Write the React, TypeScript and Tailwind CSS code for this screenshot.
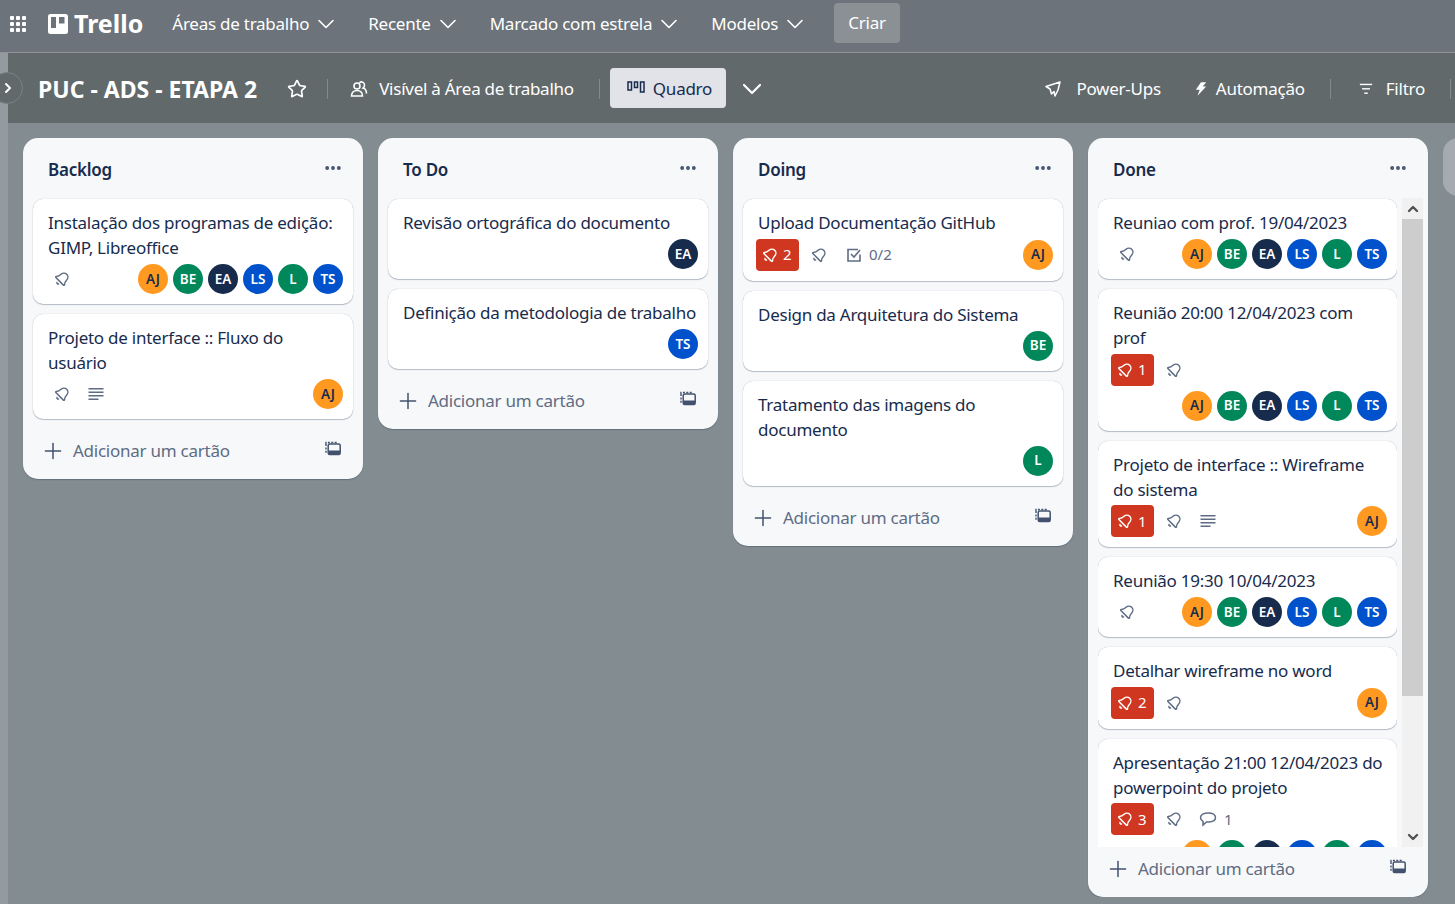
import { Bell as BellIcon, ChevronDown, ChevronRight, ChevronUp, Ellipsis, Plus, Star } from "lucide-react";

const font = "font-['Noto_Sans','Open_Sans',sans-serif]";
const bodyText = "text-[17px] tracking-[-0.25px]";

type Member = "AJ" | "BE" | "EA" | "LS" | "L" | "TS";

const memberColors: Record<Member, string> = {
  AJ: "bg-[#ff991f] text-[#172b4d]",
  BE: "bg-[#00875a] text-white",
  EA: "bg-[#172b4d] text-white",
  LS: "bg-[#0052cc] text-white",
  L: "bg-[#00875a] text-white",
  TS: "bg-[#0052cc] text-white",
};

const everyone: Member[] = ["AJ", "BE", "EA", "LS", "L", "TS"];

function Bell({ className = "" }: { className?: string }) {
  return <BellIcon className={`w-4 h-4 rotate-45 ${className}`} strokeWidth={2.2} />;
}

function Lines() {
  return (
    <svg viewBox="0 0 16 16" className="w-4 h-4 text-[#5e6c84]" fill="currentColor">
      <rect x="0.5" y="2" width="15" height="1.5" />
      <rect x="0.5" y="5.5" width="15" height="1.5" />
      <rect x="0.5" y="9" width="15" height="1.5" />
      <rect x="0.5" y="12.5" width="10" height="1.5" />
    </svg>
  );
}

function Check() {
  return (
    <svg viewBox="0 0 16 16" fill="none" stroke="currentColor" strokeWidth="1.6" className="w-4 h-4 text-[#5e6c84]">
      <path d="M14 7.5V14H2V2.5H12" />
      <path d="M5 7l3 3 6-7" />
    </svg>
  );
}

function Comment() {
  return (
    <svg viewBox="0 0 18 16" fill="none" stroke="currentColor" strokeWidth="1.5" className="w-[18px] h-4 text-[#5e6c84]">
      <path d="M9.5 2C13.5 2 16.5 3.8 16.5 6.6S13.5 11 9.5 11H7.5L4 14V10.4C2.4 9.6 1.5 8.2 1.5 6.6 1.5 3.8 5 2 9.5 2Z" />
    </svg>
  );
}

function Template() {
  return (
    <svg viewBox="0 0 16 16" className="w-4 h-4 text-[#42526e]" fill="none" stroke="currentColor">
      <path d="M1 3V1.5H13" strokeWidth="1.4" strokeDasharray="2 1.4" />
      <path d="M1 3V12.5" strokeWidth="1.4" strokeDasharray="2 1.4" />
      <rect x="3.2" y="3" width="12" height="10.5" rx="1.5" strokeWidth="1.5" />
      <rect x="3.5" y="9.5" width="11.5" height="4" fill="currentColor" stroke="none" />
    </svg>
  );
}

function Avatar({ who }: { who: Member }) {
  return (
    <span className={`w-[30px] h-[30px] shrink-0 rounded-full flex items-center justify-center text-[13.5px] font-semibold ${memberColors[who]}`}>
      {who}
    </span>
  );
}

function Badge({ count }: { count: number }) {
  return (
    <span className="h-8 w-[43px] rounded-[4px] bg-[#cf3721] text-white flex items-center pl-[6px] gap-[5px] text-[15px] -ml-[2px]">
      <Bell />
      {count}
    </span>
  );
}

type CardData = {
  title: string[];
  badge?: number;
  bell?: boolean;
  lines?: boolean;
  checks?: string;
  comments?: number;
  members?: Member[];
  // members go on a row of their own under the badges
  stack?: boolean;
};

function Card({ card }: { card: CardData }) {
  const avatars = (
    <div className="ml-auto flex gap-[5px]">
      {card.members?.map((m) => (
        <Avatar key={m} who={m} />
      ))}
    </div>
  );
  return (
    <div className="bg-white rounded-[10px] shadow-[0_1px_1px_#091e4240,0_0_1px_#091e424f] pl-[15px] pr-[10px] pt-[11px] pb-[10px] shrink-0">
      <div className={`${bodyText} leading-[25px] text-[#172b4d] whitespace-nowrap`}>
        {card.title.map((t) => (
          <div key={t}>{t}</div>
        ))}
      </div>
      <div className={`flex items-center min-h-[30px] text-[#5e6c84] ${card.badge ? "mt-[3.5px]" : "mt-[4px]"}`}>
        {card.badge ? <Badge count={card.badge} /> : null}
        {card.bell !== false && <Bell className={card.badge ? "ml-[12px]" : "ml-[6px]"} />}
        {card.lines && <span className="ml-[18px]"><Lines /></span>}
        {card.checks && (
          <span className="ml-[19px] flex items-center gap-[7px] text-[15px]">
            <Check />
            {card.checks}
          </span>
        )}
        {card.comments && (
          <span className="ml-[17px] flex items-center gap-[7px] text-[15px]">
            <Comment />
            {card.comments}
          </span>
        )}
        {!card.stack && avatars}
      </div>
      {card.stack && <div className="flex mt-[5px]">{avatars}</div>}
    </div>
  );
}

function AddCard() {
  return (
    <div className={`flex items-center h-[50px] pb-[6px] pl-[17px] pr-[22px] text-[#5e6c84] ${bodyText} shrink-0`}>
      <Plus className="w-[26px] h-[26px] text-[#42526e]" strokeWidth={1.4} />
      <span className="ml-[7px]">Adicionar um cartão</span>
      <span className="ml-auto -mt-1"><Template /></span>
    </div>
  );
}

function List({ title, cards, scroll = false }: { title: string; cards: CardData[]; scroll?: boolean }) {
  return (
    <div className={`w-[340px] shrink-0 bg-[#f7f8f9] rounded-[15px] shadow-[0_1px_1px_#091e4240] flex flex-col ${scroll ? "h-[759px]" : ""}`}>
      <div className="flex items-center justify-between h-[60px] pt-[3px] pl-[25px] pr-[20px] shrink-0">
        <span className={`${bodyText} font-semibold text-[#172b4d]`}>{title}</span>
        <Ellipsis className="w-5 h-5 -mt-[3px] text-[#42526e]" strokeWidth={2.6} />
      </div>
      {scroll ? (
        <div className="flex flex-1 min-h-0 pl-[10px] pr-[5px]">
          <div className="flex-1 min-w-0 overflow-hidden flex flex-col gap-[10px] pt-px">
            {cards.map((c) => (
              <Card key={c.title[0]} card={c} />
            ))}
          </div>
          <div className="w-[21px] ml-[5px] shrink-0 bg-[#f1f1f1] flex flex-col">
            <div className="h-[21px] flex items-center justify-center text-[#505050] shrink-0">
              <ChevronUp className="w-4 h-4" strokeWidth={3.5} />
            </div>
            <div className="h-[477px] bg-[#cdcdcd]" />
            <div className="mt-auto h-[21px] flex items-center justify-center text-[#505050]">
              <ChevronDown className="w-4 h-4" strokeWidth={3.5} />
            </div>
          </div>
        </div>
      ) : (
        <div className="flex flex-col gap-[10px] px-[10px] pt-px pb-[10px]">
          {cards.map((c) => (
            <Card key={c.title[0]} card={c} />
          ))}
        </div>
      )}
      <AddCard />
    </div>
  );
}

function NavItem({ label }: { label: string }) {
  return (
    <div className={`flex items-center gap-[3px] text-white ${bodyText}`}>
      {label}
      <ChevronDown className="w-7 h-7" strokeWidth={1.4} />
    </div>
  );
}

function Header() {
  return (
    <div className="h-[53px] shrink-0 bg-[#6c737a] border-b border-[#8e9498] flex items-center pl-[10px] pb-[5px]">
      <div className="grid grid-cols-3 gap-[2px] w-[16px] mr-[22px]">
        {Array.from({ length: 9 }).map((_, i) => (
          <span key={i} className="w-[4px] h-[4px] bg-white rounded-[1px]" />
        ))}
      </div>
      <div className="flex items-center gap-[6px] text-white text-[25px] font-bold mr-[29px]">
        <svg viewBox="0 0 20 20" className="w-[20px] h-[20px]">
          <path fill="white" fillRule="evenodd" d="M2.5 0h15A2.5 2.5 0 0 1 20 2.5v15a2.5 2.5 0 0 1-2.5 2.5h-15A2.5 2.5 0 0 1 0 17.5v-15A2.5 2.5 0 0 1 2.5 0ZM3 3v11h5V3ZM11 3v6.5h5.5V3Z" />
        </svg>
        Trello
      </div>
      <div className="flex items-center gap-[28px]">
        <NavItem label="Áreas de trabalho" />
        <NavItem label="Recente" />
        <NavItem label="Marcado com estrela" />
        <NavItem label="Modelos" />
      </div>
      <button className={`ml-[25px] -mt-[2px] h-[40px] w-[66px] rounded-[4px] bg-[#8b9094] text-white ${bodyText}`}>Criar</button>
    </div>
  );
}

function Divider() {
  return <span className="block w-px h-5 bg-[#828a8c]" />;
}

function BoardBar() {
  return (
    <div className={`h-[70px] shrink-0 bg-[#62696b] flex items-center pt-[2px] text-white ${bodyText} pl-[30px] pr-[4px] relative`}>
      <div className="absolute -left-[17px] top-[19px] w-[32px] h-[32px] rounded-full bg-[#62696b] border border-[#7b8285] flex items-center justify-center pl-[2px]">
        <ChevronRight className="w-4 h-4" strokeWidth={3} />
      </div>
      <span className="text-[23px] font-bold tracking-normal">PUC - ADS - ETAPA 2</span>
      <Star className="w-5 h-5 ml-[30px]" strokeWidth={2} />
      <span className="ml-[20px]"><Divider /></span>
      <svg viewBox="0 0 18 18" fill="none" stroke="currentColor" strokeWidth="1.6" className="w-[18px] h-[18px] ml-[22px]">
        <circle cx="7" cy="6" r="3" />
        <path d="M1.5 16c0-3.5 2.5-5.5 5.5-5.5s5.5 2 5.5 5.5Z" />
        <path d="M9.5 2.8a3 3 0 0 1 5 2.7c0 1.2-.6 2-1.5 2.6 2 .6 3.5 2.5 3.5 5.4" />
      </svg>
      <span className="ml-[11px]">Visível à Área de trabalho</span>
      <span className="ml-[25px]"><Divider /></span>
      <div className="ml-[10px] -mt-[2px] h-[40px] w-[116px] rounded-[4px] bg-[#e1e3e9] text-[#172b4d] flex items-center pl-[17px] pt-[2px] gap-[8px]">
        <svg viewBox="0 0 18 12" className="w-[18px] h-[12px] -mt-[5px]" fill="none" stroke="currentColor" strokeWidth="1.5">
          <rect x="1" y="1" width="3.5" height="8" />
          <rect x="7.5" y="1" width="3" height="5.5" />
          <rect x="13.5" y="1" width="3.5" height="10" />
        </svg>
        Quadro
      </div>
      <ChevronDown className="w-8 h-8 ml-[10px]" strokeWidth={1.6} />
      <div className="ml-auto flex items-center">
        <svg viewBox="0 0 16 16" fill="none" stroke="currentColor" strokeWidth="1.5" strokeLinejoin="round" className="w-4 h-4 mr-[15px]">
          <path d="M15 1 1 5.5 5 8 6.5 13 9 10.5 10 15 13 9Z" />
        </svg>
        <span>Power-Ups</span>
        <svg viewBox="0 0 14 18" fill="white" className="w-[12px] h-[18px] ml-[34px] mr-[9px]">
          <path d="M7 1 13 1 9 6 13 6 3 17 5.5 10 1 10Z" />
        </svg>
        <span>Automação</span>
        <span className="ml-[25px]"><Divider /></span>
        <svg viewBox="0 0 16 12" className="w-[14px] h-[12px] ml-[28px] mr-[13px]" fill="white">
          <rect x="1" y="0" width="14" height="1.6" />
          <rect x="3.5" y="5" width="9" height="1.6" />
          <rect x="6" y="10" width="4" height="1.6" />
        </svg>
        <span>Filtro</span>
        <span className="ml-[25px]"><Divider /></span>
      </div>
    </div>
  );
}

const backlog: CardData[] = [
  { title: ["Instalação dos programas de edição:", "GIMP, Libreoffice"], members: everyone },
  { title: ["Projeto de interface :: Fluxo do", "usuário"], lines: true, members: ["AJ"] },
];

const todo: CardData[] = [
  { title: ["Revisão ortográfica do documento"], bell: false, members: ["EA"] },
  { title: ["Definição da metodologia de trabalho"], bell: false, members: ["TS"] },
];

const doing: CardData[] = [
  { title: ["Upload Documentação GitHub"], badge: 2, checks: "0/2", members: ["AJ"] },
  { title: ["Design da Arquitetura do Sistema"], bell: false, members: ["BE"] },
  { title: ["Tratamento das imagens do", "documento"], bell: false, members: ["L"] },
];

const done: CardData[] = [
  { title: ["Reuniao com prof. 19/04/2023"], members: everyone },
  { title: ["Reunião 20:00 12/04/2023 com", "prof"], badge: 1, members: everyone, stack: true },
  { title: ["Projeto de interface :: Wireframe", "do sistema"], badge: 1, lines: true, members: ["AJ"] },
  { title: ["Reunião 19:30 10/04/2023"], members: everyone },
  { title: ["Detalhar wireframe no word"], badge: 2, members: ["AJ"] },
  { title: ["Apresentação 21:00 12/04/2023 do", "powerpoint do projeto"], badge: 3, comments: 1, members: everyone, stack: true },
];

export default function App() {
  return (
    <div className={`${font} w-[1455px] h-[904px] overflow-hidden flex flex-col bg-[#838c91]`}>
      <Header />
      <div className="flex flex-1 min-h-0">
        <div className="w-[8px] shrink-0 bg-[#949ba0]" />
        <div className="flex-1 min-w-0 flex flex-col">
          <BoardBar />
          <div className="flex items-start gap-[15px] pl-[15px] pt-[15px] overflow-hidden">
            <List title="Backlog" cards={backlog} />
            <List title="To Do" cards={todo} />
            <List title="Doing" cards={doing} />
            <List title="Done" cards={done} scroll />
            <div className="w-[340px] h-[58px] shrink-0 bg-[#a5abaf] rounded-[15px]" />
          </div>
        </div>
      </div>
    </div>
  );
}
